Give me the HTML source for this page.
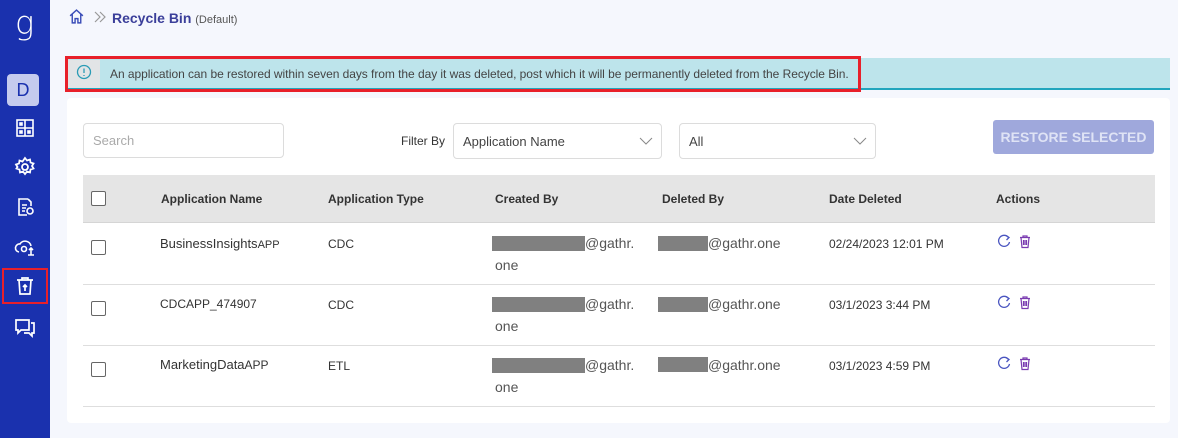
<!DOCTYPE html>
<html><head><style>
*{box-sizing:border-box;margin:0;padding:0}
body{width:1178px;height:438px;background:#f5f7fd;font-family:"Liberation Sans",sans-serif;position:relative;overflow:hidden;color:#333}
.a{position:absolute}
.sb{left:0;top:0;width:50px;height:438px;background:#1a31ae}
.ic{left:13px;width:24px;height:24px}
.inp{background:#fff;border:1px solid #dcdcdc;border-radius:4px;font-size:13px;color:#444;padding:0 9px;display:flex;align-items:center}
.cb{width:15px;height:15px;border:1.5px solid #666;border-radius:2px;background:#fff}
.h{font-size:12px;font-weight:bold;color:#333;top:192px}
.t{font-size:12px;color:#333}
.red{background:#808080;height:15px}
.line{left:83px;width:1072px;height:1px;background:#dedede}
</style></head><body>
<div class="a sb"></div>
<div class="a" style="left:15px;top:4px;color:#fff;font-size:32px;font-family:'DejaVu Sans',sans-serif;font-weight:200">g</div>
<div class="a" style="left:7px;top:74px;width:32px;height:32px;background:#c5cbee;border-radius:4px;color:#1a31ae;font-size:18px;text-align:center;line-height:32px">D</div>
<svg class="a ic" style="top:116px" viewBox="0 0 24 24" fill="none" stroke="#fff" stroke-width="1.6"><rect x="4" y="4" width="16" height="16"/><path d="M12 4v16M4 12h16"/><rect x="7" y="7" width="2" height="2" fill="#fff"/><rect x="15" y="15" width="2" height="2" fill="#fff"/><rect x="7" y="15" width="2" height="2" fill="#fff"/></svg>
<svg class="a ic" style="top:155px" viewBox="0 0 24 24" fill="none" stroke="#fff" stroke-width="1.8"><circle cx="12" cy="12" r="3"/><path d="M12 3l2 2.5 3-1 .5 3 3 1-1.5 2.5 1.5 2.5-3 1-.5 3-3-1-2 2.5-2-2.5-3 1-.5-3-3-1L4.5 12 3 9.5l3-1 .5-3 3 1z"/></svg>
<svg class="a ic" style="top:195px" viewBox="0 0 24 24" fill="none" stroke="#fff" stroke-width="1.6"><path d="M15 4H6v16h8M15 4l3 3v4"/><path d="M9 10h5M9 13h4M9 16h3"/><circle cx="17" cy="16" r="3"/></svg>
<svg class="a ic" style="top:235px" viewBox="0 0 24 24" fill="none" stroke="#fff" stroke-width="1.6"><path d="M6 17a4 4 0 0 1 1-8 6 6 0 0 1 11 2"/><circle cx="11" cy="14" r="2.5"/><path d="M18 13v7M15 20h6M16 15l2-2 2 2"/></svg>
<div class="a" style="left:2px;top:268px;width:46px;height:36px;border:2px solid #e8202a"></div>
<svg class="a ic" style="top:274px" viewBox="0 0 24 24" fill="none" stroke="#fff" stroke-width="1.7"><path d="M4 6h16M9 6V4h6v2M6 6l1 14h10l1-14M12 17v-6M10 13l2-2 2 2"/></svg>
<svg class="a ic" style="top:315px" viewBox="0 0 24 24" fill="none" stroke="#fff" stroke-width="1.7"><path d="M3 5h13v10H8l-3 3v-3H3z"/><path d="M18 8h3v10h-2v3l-3-3h-5"/></svg>

<svg class="a" style="left:68px;top:8px" width="17" height="17" viewBox="0 0 24 24" fill="none" stroke="#3a4db8" stroke-width="2"><path d="M3 11l9-8 9 8M6 9v12h4v-6h4v6h4V9"/></svg>
<svg class="a" style="left:94px;top:11px" width="12" height="12" viewBox="0 0 12 12" fill="none" stroke="#999" stroke-width="1.2"><path d="M1 1l5 5-5 5M6 1l5 5-5 5"/></svg>
<div class="a" style="left:112px;top:10px;font-size:14px;font-weight:bold;color:#3b3f9a">Recycle Bin <span style="font-weight:normal;font-size:11px;color:#555">(Default)</span></div>

<div class="a" style="left:66px;top:58px;width:1104px;height:32px;background:#bde4eb;border-bottom:2px solid #22a5bd"></div>
<div class="a" style="left:68px;top:60px;width:32px;height:28px;background:#e2e4e6"></div>
<svg class="a" style="left:76px;top:64px" width="16" height="16" viewBox="0 0 16 16" fill="none" stroke="#2a9bb5" stroke-width="1.3"><circle cx="8" cy="8" r="6.5"/><path d="M8 4.5v4.5M8 11v1"/></svg>
<div class="a" style="left:110px;top:67px;font-size:12px;color:#444;letter-spacing:-0.05px">An application can be restored within seven days from the day it was deleted, post which it will be permanently deleted from the Recycle Bin.</div>
<div class="a" style="left:65px;top:56px;width:796px;height:36px;border:3px solid #e8202a"></div>

<div class="a" style="left:67px;top:98px;width:1103px;height:325px;background:#fff;border-radius:4px"></div>
<div class="a inp" style="left:83px;top:123px;width:201px;height:35px;color:#aaa">Search</div>
<div class="a t" style="left:401px;top:134px">Filter By</div>
<div class="a inp" style="left:453px;top:123px;width:209px;height:36px">Application Name</div>
<svg class="a" style="left:639px;top:137px" width="14" height="9" viewBox="0 0 14 9" fill="none" stroke="#888"><path d="M1 1l6 6 6-6"/></svg>
<div class="a inp" style="left:679px;top:123px;width:197px;height:36px">All</div>
<svg class="a" style="left:853px;top:137px" width="14" height="9" viewBox="0 0 14 9" fill="none" stroke="#888"><path d="M1 1l6 6 6-6"/></svg>
<div class="a" style="left:993px;top:120px;width:161px;height:34px;background:#9fa8dc;border-radius:3px;color:#dfe3f5;font-size:14px;font-weight:bold;text-align:center;line-height:34px">RESTORE SELECTED</div>

<div class="a" style="left:83px;top:175px;width:1072px;height:48px;background:#e5e5e5;border-bottom:1px solid #d5d5d5"></div>
<div class="a cb" style="left:91px;top:191px"></div>
<div class="a h" style="left:161px">Application Name</div>
<div class="a h" style="left:328px">Application Type</div>
<div class="a h" style="left:495px">Created By</div>
<div class="a h" style="left:662px">Deleted By</div>
<div class="a h" style="left:829px">Date Deleted</div>
<div class="a h" style="left:996px">Actions</div>

<div class="a line" style="top:284px"></div>
<div class="a line" style="top:345px"></div>
<div class="a line" style="top:406px"></div>

<div class="a cb" style="left:91px;top:240px"></div>
<div class="a" style="left:160px;top:236px;font-size:13px">BusinessInsights<span style="font-size:11px">APP</span></div>
<div class="a t" style="left:328px;top:237px">CDC</div>
<div class="a red" style="left:492px;top:236px;width:93px"></div>
<div class="a" style="left:585px;top:235px;font-size:14px;color:#555">@gathr.</div>
<div class="a" style="left:495px;top:257px;font-size:14px;color:#555">one</div>
<div class="a red" style="left:658px;top:236px;width:50px"></div>
<div class="a" style="left:708px;top:235px;font-size:14px;color:#555">@gathr.one</div>
<div class="a t" style="left:829px;top:237px">02/24/2023 12:01 PM</div>

<div class="a cb" style="left:91px;top:301px"></div>
<div class="a" style="left:160px;top:297px;font-size:12px">CDCAPP_474907</div>
<div class="a t" style="left:328px;top:298px">CDC</div>
<div class="a red" style="left:492px;top:297px;width:93px"></div>
<div class="a" style="left:585px;top:296px;font-size:14px;color:#555">@gathr.</div>
<div class="a" style="left:495px;top:318px;font-size:14px;color:#555">one</div>
<div class="a red" style="left:658px;top:297px;width:50px"></div>
<div class="a" style="left:708px;top:296px;font-size:14px;color:#555">@gathr.one</div>
<div class="a t" style="left:829px;top:298px">03/1/2023 3:44 PM</div>

<div class="a cb" style="left:91px;top:362px"></div>
<div class="a" style="left:160px;top:357px;font-size:13px">MarketingData<span style="font-size:12px">APP</span></div>
<div class="a t" style="left:328px;top:359px">ETL</div>
<div class="a red" style="left:492px;top:358px;width:93px"></div>
<div class="a" style="left:585px;top:357px;font-size:14px;color:#555">@gathr.</div>
<div class="a" style="left:495px;top:379px;font-size:14px;color:#555">one</div>
<div class="a red" style="left:658px;top:357px;width:50px"></div>
<div class="a" style="left:708px;top:357px;font-size:14px;color:#555">@gathr.one</div>
<div class="a t" style="left:829px;top:359px">03/1/2023 4:59 PM</div>

<svg width="0" height="0" style="position:absolute"><defs>
<g id="rf"><path d="M12.5 4.5A5.5 5.5 0 1 0 13.5 9" fill="none" stroke="#4a55c0" stroke-width="1.3"/><path d="M10 2.5l3 2-2.5 2.5" fill="none" stroke="#4a55c0" stroke-width="1.3"/></g>
<g id="tr"><path d="M2 3.5h10M5 3.5V2h4v1.5M3 3.5l1 10h6l1-10M5.5 6v5M7 6v5M8.5 6v5" fill="none" stroke="#7a3bb0" stroke-width="1.2"/></g>
</defs></svg>
<svg class="a" style="left:996px;top:233px" width="16" height="16"><use href="#rf"/></svg>
<svg class="a" style="left:1018px;top:234px" width="14" height="16"><use href="#tr"/></svg>
<svg class="a" style="left:996px;top:294px" width="16" height="16"><use href="#rf"/></svg>
<svg class="a" style="left:1018px;top:295px" width="14" height="16"><use href="#tr"/></svg>
<svg class="a" style="left:996px;top:355px" width="16" height="16"><use href="#rf"/></svg>
<svg class="a" style="left:1018px;top:356px" width="14" height="16"><use href="#tr"/></svg>
</body></html>
